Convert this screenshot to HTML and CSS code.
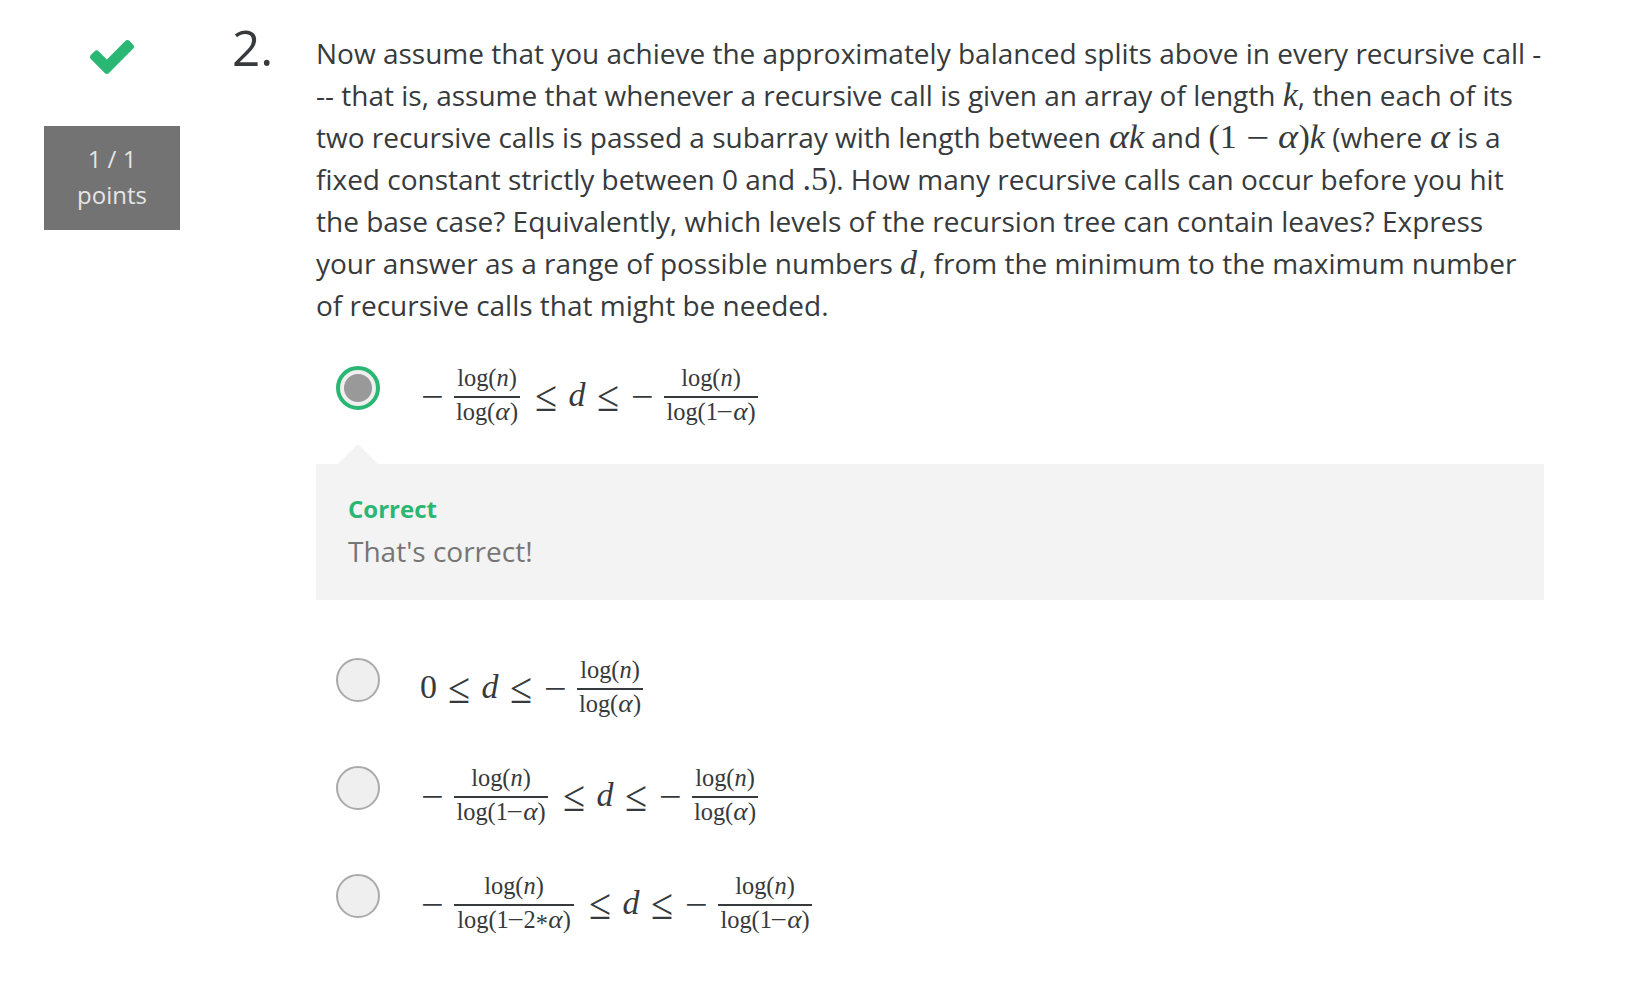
FILE: index.html
```html
<!DOCTYPE html>
<html lang="en">
<head>
<meta charset="utf-8">
<title>Quiz question</title>
<link rel="stylesheet" href="styles.css">
</head>
<body>
<main class="question">
  <aside class="status">
    <svg class="check" viewBox="121 334 1550 1188" preserveAspectRatio="none" aria-hidden="true"><path d="M1671 566q0 40-28 68l-724 724-136 136q-28 28-68 28t-68-28l-136-136-362-362q-28-28-28-68t28-68l136-136q28-28 68-28t68 28l294 295 656-657q28-28 68-28t68 28l136 136q28 28 28 68z"/></svg>
    <div class="points">1 / 1<br>points</div>
  </aside>
  <div class="number">2.</div>
  <section class="content">
    <p class="prompt">Now assume that you achieve the approximately balanced splits above in every recursive call -<br>-- that is, assume that whenever a recursive call is given an array of length <span class="math"><i>k</i></span>, then each of its<br>two recursive calls is passed a subarray with length between <span class="math"><i class="alpha">α</i><i>k</i></span> and <span class="math">(1<span class="op">−</span><i class="alpha">α</i>)<i>k</i></span> (where <span class="math"><i class="alpha">α</i></span> is a<br>fixed constant strictly between 0 and <span class="math">.5</span>). How many recursive calls can occur before you hit<br>the base case? Equivalently, which levels of the recursion tree can contain leaves? Express<br>your answer as a range of possible numbers <span class="math dee"><i>d</i></span>, from the minimum to the maximum number<br>of recursive calls that might be needed.</p>

    <div class="option">
      <span class="radio selected"></span>
      <div class="formula">
        <span class="minus lead">−</span>
        <span class="frac short"><span class="num">log(<i>n</i>)</span><span class="den">log(<i class="alpha">α</i>)</span></span>
        <span class="rel after">≤</span><i class="var">d</i><span class="rel">≤</span><span class="minus">−</span>
        <span class="frac mid"><span class="num">log(<i>n</i>)</span><span class="den">log(1<span class="dash">−</span><i class="alpha">α</i>)</span></span>
      </div>
    </div>
    <div class="feedback">
      <div class="verdict">Correct</div>
      <div class="message">That's correct!</div>
    </div>
    <div class="option">
      <span class="radio"></span>
      <div class="formula">
        <span class="zero">0</span>
        <span class="rel">≤</span><i class="var">d</i><span class="rel">≤</span><span class="minus">−</span>
        <span class="frac short"><span class="num">log(<i>n</i>)</span><span class="den">log(<i class="alpha">α</i>)</span></span>
      </div>
    </div>
    <div class="option">
      <span class="radio"></span>
      <div class="formula">
        <span class="minus lead">−</span>
        <span class="frac mid"><span class="num">log(<i>n</i>)</span><span class="den">log(1<span class="dash">−</span><i class="alpha">α</i>)</span></span>
        <span class="rel after">≤</span><i class="var">d</i><span class="rel">≤</span><span class="minus">−</span>
        <span class="frac short"><span class="num">log(<i>n</i>)</span><span class="den">log(<i class="alpha">α</i>)</span></span>
      </div>
    </div>
    <div class="option">
      <span class="radio"></span>
      <div class="formula">
        <span class="minus lead">−</span>
        <span class="frac long"><span class="num">log(<i>n</i>)</span><span class="den">log(1<span class="dash">−</span>2<span class="star">*</span><i class="alpha">α</i>)</span></span>
        <span class="rel after">≤</span><i class="var">d</i><span class="rel">≤</span><span class="minus">−</span>
        <span class="frac mid"><span class="num">log(<i>n</i>)</span><span class="den">log(1<span class="dash">−</span><i class="alpha">α</i>)</span></span>
      </div>
    </div>
  </section>
</main>
</body>
</html>
```
FILE: styles.css
```css
* { box-sizing: border-box; }
body {
  margin: 0;
  background: #fff;
  color: #373a3c;
  font: 28px/42px "Open Sans", "Noto Sans", sans-serif;
}
.question { display: flex; height: 998px; padding: 32px 0 0 44px; overflow: hidden; }
.status { width: 136px; display: flex; flex-direction: column; align-items: center; padding-top: 8px; }
.check { display: block; width: 44px; height: 34px; margin-bottom: 52px; fill: #2ab673; }
.points {
  width: 136px; height: 104px; padding-top: 15px;
  background: #737373; color: #e5e5e5;
  font-size: 24px; line-height: 36px; text-align: center;
}
.number { width: 84px; margin-left: 52px; font-size: 49.5px; line-height: 31px; }
.content { width: 1228px; }
.prompt { margin: 0 0 40px; white-space: nowrap; }
.math, .formula { font-family: "Liberation Serif", serif; }
.math { display: inline-block; font-size: 34px; line-height: 34px; height: 34px; margin: -4px 0; white-space: nowrap; }
.dee { width: 19px; }
.alpha { display: inline-block; margin: 0 .04em; transform: scaleX(1.12); }
.op { display: inline-block; margin: 0 11px; transform: translateY(1px) scaleX(1.2); }
.dash { display: inline-block; margin: 0 .5px; transform: scaleX(1.2); }
.star { display: inline-block; transform: translateY(4px); }

.option { display: flex; height: 108px; padding-left: 20px; }
.radio { width: 44px; height: 44px; border: 2px solid #aaa; border-radius: 50%; background: #efefef; }
.radio.selected {
  border: 4px solid #2ab673;
  background: radial-gradient(circle closest-side, #999 13.5px, #efefef 14.5px);
}
.formula { display: flex; align-items: flex-start; margin-left: 40px; font-size: 34px; line-height: 40px; }
.minus, .rel, .var, .zero { display: flex; justify-content: center; margin-top: 9px; width: 20px; flex: none; }
.minus { margin-left: 14px; margin-right: 12px; transform: translateY(1.5px) scaleX(1.18); }
.minus.lead { margin-left: 2px; }
.rel { transform: translateY(2px) scale(1.18, 1.28); }
.rel.after { margin-left: 16px; }
.zero { width: 17px; margin-right: 12px; }
.var { width: 18px; margin-left: 12px; margin-right: 12px; }
.frac { display: flex; flex-direction: column; flex: none; font-size: 24.4px; line-height: 26px; text-align: center; white-space: nowrap; }
.minus:not(.lead) + .frac { margin-left: 0; }
.num { height: 31px; margin-top: -1px; }
.den { border-top: 2px solid #373a3c; padding-top: 1px; }
.short { width: 66px; }
.mid { width: 94px; }
.long { width: 120px; }
.zero ~ .frac { margin-left: 1px; }

.feedback { position: relative; height: 136px; margin: -10px 0 58px; padding: 27px 32px 0; background: #f3f3f3; }
.feedback::before {
  content: ""; position: absolute; left: 22px; top: -20px;
  border: 20px solid transparent; border-top: 0; border-bottom-color: #f3f3f3;
}
.verdict { margin-bottom: 3px; color: #2ab673; font-size: 24px; line-height: 36px; font-weight: 700; }
.message { color: #757575; }
```
